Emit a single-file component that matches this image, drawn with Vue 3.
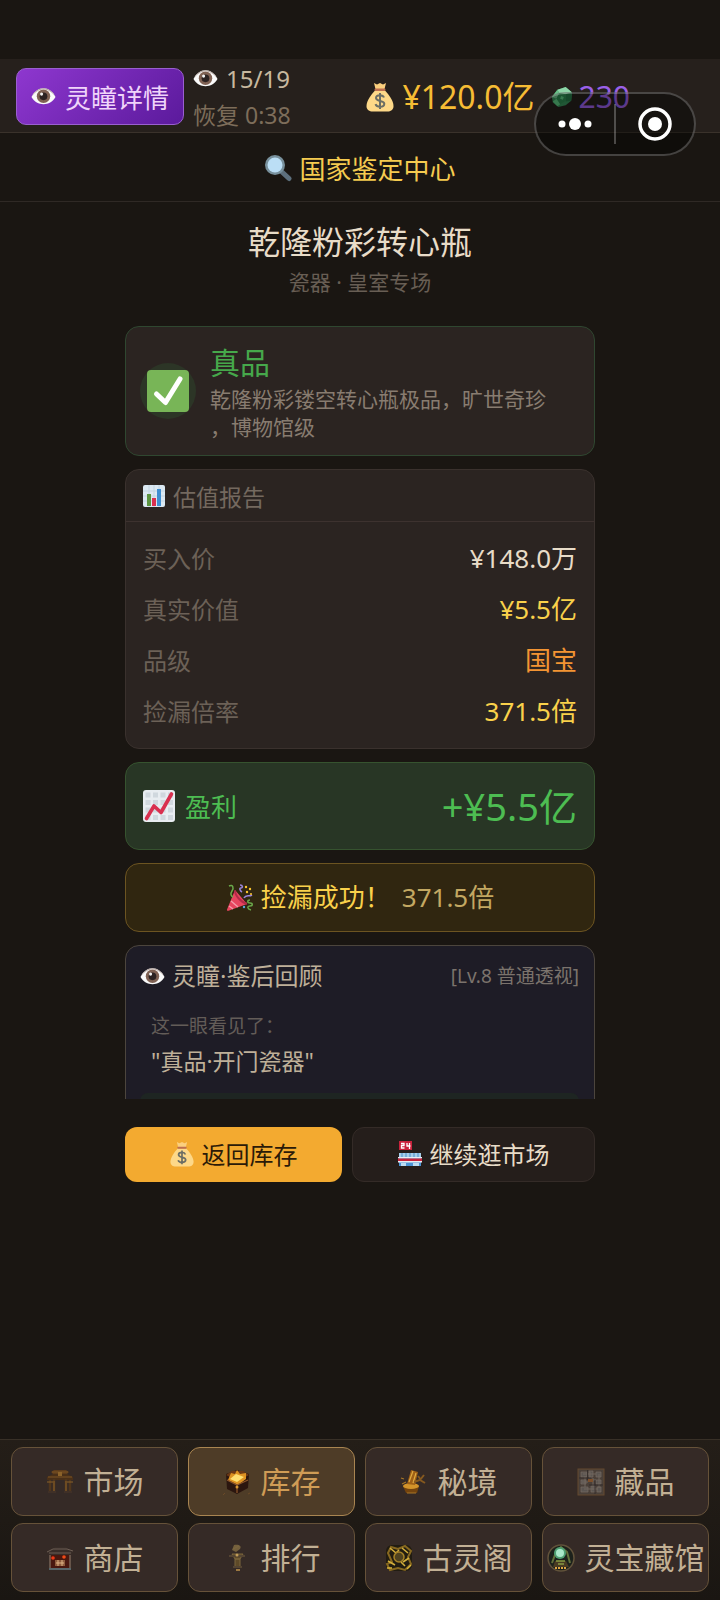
<template>
  <div class="app-page">
    <svg class="sprite" width="0" height="0" aria-hidden="true">
      <symbol id="i-eye" viewBox="0 0 26 26">
        <path d="M.5 13.500C3.500 7.500 8 4.500 13 4.500s9.500 3 12.500 9C22.500 18.500 18 21 13 21S3.500 18.500.5 13.500z" fill="#fafafa" />
        <circle cx="13" cy="12.800" r="7" fill="#806254" />
        <circle cx="13" cy="12.800" r="4" fill="#2c2222" />
        <circle cx="11" cy="10.500" r="1.600" fill="#f3f3f3" />
        <path d="M.5 13.500C3.500 7.500 8 4.500 13 4.500s9.500 3 12.500 9C22 8.500 18 5.800 13 5.800S4 8.500.5 13.500z" fill="#b9aaa4" />
      </symbol>
      <symbol id="i-bag" viewBox="0 0 28 30">
        <path d="M8 1l3 1.500L14 1l3 1.500L20 1l-1.500 6h-9z" fill="#fbcf7e" />
        <path d="M9 8.500h10C23 13 27.500 19 27.500 24c0 4-3 5.500-6 5.500h-15c-3 0-6-1.500-6-5.500 0-5 4.500-11 8.500-15.500z" fill="#fdd888" />
        <rect x="8.500" y="6.500" width="11" height="2.500" rx="1.200" fill="#bd6f50" />
        <path d="M18 15.500c-.6-1.600-2-2.300-4-2.300-2.300 0-4 1-4 2.800 0 4 8.300 1.800 8.300 5.800 0 1.900-1.800 3-4.200 3-2.300 0-4-.9-4.600-2.600M14 11v16" fill="none" stroke="#6b6e65" stroke-width="2" />
      </symbol>
      <symbol id="i-gem" viewBox="0 0 24 24">
        <path d="M1 12l6-8 9-3 7 6-1 9-6 5-8 2-6-5z" fill="#38925a" />
        <path d="M7 4l9-3 7 6-7 2-7-1z" fill="#8ed6a8" />
        <path d="M1 12l6-8 2 4-3 6z" fill="#6abf88" />
        <path d="M16 9l7-2-1 9-6 1z" fill="#277a48" />
        <path d="M6 14l3-6 7 1v7l-6 4z" fill="#2d8a50" />
        <path d="M11 11l3 1-1 3-3-1zM6 14l4 6-3 2-5-5z" fill="#5cc880" />
      </symbol>
      <symbol id="i-search" viewBox="0 0 28 28">
        <path d="M18 18l7 6.500" stroke="#5d6f7c" stroke-width="5" stroke-linecap="round" />
        <circle cx="11" cy="11" r="10" fill="#78909c" />
        <circle cx="11" cy="11" r="7.500" fill="#bbdef5" />
      </symbol>
      <symbol id="i-check" viewBox="0 0 42 42">
        <rect width="42" height="42" rx="4" fill="#78b557" />
        <path d="M9.500 24l9 8.500L33 9" fill="none" stroke="#fff" stroke-width="5" stroke-linecap="round" stroke-linejoin="round" />
      </symbol>
      <symbol id="i-bars" viewBox="0 0 22 22">
        <rect width="22" height="22" rx="2" fill="#dce9f3" />
        <path d="M0 6h22M0 11h22M0 16h22M6 0v22M11 0v22M16 0v22" stroke="#c3d5e2" stroke-width="1" />
        <rect x="4" y="9" width="4" height="12" fill="#5b9440" />
        <rect x="9" y="13" width="4" height="8" fill="#d9304f" />
        <rect x="14" y="4" width="4" height="17" fill="#3f8fd2" />
      </symbol>
      <symbol id="i-trend" viewBox="0 0 32 32">
        <rect width="32" height="32" rx="3" fill="#e8edf1" />
        <path d="M2.500 2.500h5v5h-5zM10 2.500h5v5h-5zM17.500 2.500h5v5h-5zM25 2.500h5v5h-5zM2.500 10h5v5h-5zM10 10h5v5h-5zM17.500 10h5v5h-5zM25 10h5v5h-5zM2.500 17.500h5v5h-5zM10 17.500h5v5h-5zM17.500 17.500h5v5h-5zM25 17.500h5v5h-5zM2.500 25h5v5h-5zM10 25h5v5h-5zM17.500 25h5v5h-5zM25 25h5v5h-5z" fill="#d0d8de" />
        <path d="M3.500 28.500L11 16l7 6.500L28.500 4" fill="none" stroke="#d9304f" stroke-width="3.600" stroke-linecap="round" stroke-linejoin="round" />
      </symbol>
      <symbol id="i-party" viewBox="0 0 28 28">
        <path d="M9 6L1 25.500c-.4 1 .5 1.700 1.500 1.200L21 20z" fill="#e8455f" />
        <path d="M9 6.500c0 5 6 12 12 13.200" fill="none" stroke="#b32b49" stroke-width="2" />
        <path d="M3 22l4 3M5 17l7 6" stroke="#f49aa8" stroke-width="1.500" />
        <path d="M3 2c4-2 5 2 3 5s-1 5 1 6M24 16c-3 0-3 3 0 3s3 3 0 3-3 3 1 4" fill="none" stroke="#6aa84a" stroke-width="1.500" />
        <path d="M14 1c3 0 3 3 1 3s-1 3 1 4M18 14c2-4 5-1 8-3" fill="none" stroke="#9a86dc" stroke-width="1.600" />
        <g fill="#fbc52d"><circle cx="20" cy="3" r="1.200" /><circle cx="24" cy="5" r="1.200" /><circle cx="21" cy="8" r="1.200" /><circle cx="25" cy="10" r="1" /></g>
        <circle cx="18" cy="23" r="1.200" fill="#5ba7dc" />
      </symbol>
      <symbol id="i-store" viewBox="0 0 24 26">
        <rect x="1" y="0" width="13" height="9" fill="#c9223c" />
        <path d="M3 2.500h3v2H3.500V7H6.500M9 2v3h3.500M11.500 2v6" fill="none" stroke="#fff" stroke-width="1.300" />
        <path d="M1 12h22v13H1z" fill="#4b93d4" />
        <path d="M1 12h22v4H1z" fill="#a6cdea" />
        <path d="M4 12v4M8 12v4M12 12v4M16 12v4M20 12v4" stroke="#6aa5d5" stroke-width="1.500" />
        <path d="M0 16h24v1.500H0zM0 20h24v1.500H0z" fill="#e7eef3" />
        <path d="M0 17.500h24V20H0z" fill="#c9223c" />
        <path d="M3 22h5v3H3zM15 22h6v3h-6z" fill="#bcdcf2" />
      </symbol>
      <symbol id="i-gate" viewBox="0 0 28 28">
        <path d="M5 4l3-2h12l3 2-3 3H8z" fill="#5f3d1b" />
        <path d="M1 9l6-3h14l6 3v3H1z" fill="#4a3018" />
        <path d="M6 4h16M2 9h24" stroke="#7c5525" stroke-width="1" />
        <path d="M4 12v11M8 11v14M20 11v14M24 12v11" stroke="#50361c" stroke-width="2.500" />
        <path d="M8 13v11M20 13v11M1 14h6M21 14h6" stroke="#8a6029" stroke-width="1" />
        <path d="M2 24h8M18 24h8" stroke="#403027" stroke-width="2" />
        <path d="M12 4h4v4h-4z" fill="#8b6229" />
      </symbol>
      <symbol id="i-chest" viewBox="0 0 28 28">
        <path d="M3 6L14 2l12 4-1 14-11 6-10-5z" fill="#2b160f" />
        <path d="M3 7l6-4h11l6 4-11 6z" fill="#6b3915" />
        <path d="M5 12l3-7 4 1 2-4 3 4 6-1v6l-8 6z" fill="#dd9322" />
        <path d="M7 11l6-5 8 3-7 5z" fill="#ffe070" />
        <path d="M4 12l10 5 11-5M14 17v8" fill="none" stroke="#8c552a" stroke-width="1.200" />
        <circle cx="14" cy="19" r="1.500" fill="#d79733" />
        <path d="M0 27l2-2M25 26l2-1" stroke="#6b4a27" stroke-width="1" />
      </symbol>
      <symbol id="i-realm" viewBox="0 0 28 28">
        <path d="M3 18h16l-2 7H6z" fill="#74440e" />
        <ellipse cx="11" cy="18" rx="8" ry="3" fill="#d3942a" />
        <path d="M7 16l4-14 7 2-3 13z" fill="#9f6016" />
        <path d="M9 14l4-11M13 15l3-10" stroke="#e0aa40" stroke-width="1.200" />
        <path d="M14 14l6-2 4-5M20 12l5 3M18 8l3 4" fill="none" stroke="#86591f" stroke-width="2" />
        <path d="M2 16l4-2M1 10l3 1M7 25h9" stroke="#a97727" stroke-width="1.200" />
      </symbol>
      <symbol id="i-tablet" viewBox="0 0 28 28">
        <rect x="1" y="1" width="26" height="26" fill="#4a4039" stroke="#64492f" />
        <path d="M4 4h6v5H4zM12 3h4v6h-4zM19 4h5v5h-5zM4 12h5v4H4zM19 12h5v4h-5zM4 19h7v5H4zM14 18h4v6h-4zM20 19h4v5h-4z" fill="#5b5551" stroke="#756a62" stroke-width=".7" />
        <path d="M6 6h13M5 14h6M16 10v12M7 21h14M22 6v14M8 8v11M11 12h8M13 4v6" stroke="#70665f" stroke-width="1" />
        <path d="M11 11h5v3h-5z" fill="#7d502c" />
        <path d="M2 10h12M12 17h14M10.500 2v10M18 12v14" stroke="#302a28" stroke-width=".8" />
      </symbol>
      <symbol id="i-shop" viewBox="0 0 28 28">
        <path d="M1 8l5-3 3-2h11l3 2 4 2-2 5H3z" fill="#382d28" />
        <path d="M1 8l6-3h14l6 2M3 9h22" fill="none" stroke="#6d5e54" stroke-width="1" />
        <path d="M4 11h20v13H4z" fill="#48180f" />
        <path d="M4 11v13M24 11v13" stroke="#776356" stroke-width="1.500" />
        <path d="M3 25h22" stroke="#6f9099" stroke-width="1.200" />
        <path d="M9 16h10v6H9z" fill="#8c5a3b" />
        <path d="M10 19h8M12 16v6M16 16v6" stroke="#dcb285" stroke-width="1" />
        <circle cx="7" cy="14" r="1.800" fill="#ef3815" /><circle cx="18" cy="13" r="1.800" fill="#f04a18" />
      </symbol>
      <symbol id="i-rank" viewBox="0 0 28 28">
        <path d="M11 1c5-1 8 1 6 4l-4 3-4-2z" fill="#74603d" />
        <path d="M10 5l6-3M9 10h11l-3 5h-5zM12 15h5v8h-5z" fill="#5d4928" stroke="#7d673d" stroke-width="1" />
        <path d="M6 12h16M10 23h9" stroke="#544432" stroke-width="2" />
        <path d="M13 25h4v2h-4z" fill="#9b7740" />
        <circle cx="14" cy="11" r="1.500" fill="#c19d59" />
      </symbol>
      <symbol id="i-pavilion" viewBox="0 0 28 28">
        <rect x="1" y="1" width="26" height="26" rx="6" fill="#211c11" />
        <path d="M3 9l3-6 7 2 7-3 6 5-3 6 3 7-6 6-7-2-8 2-3-6 5-2z" fill="none" stroke="#876820" stroke-width="2" />
        <path d="M5 4l6 5M17 4l6 5M3 17l7 4M18 18l6-4M14 6l-3 3M20 22l-4-4" stroke="#d2ae3c" stroke-width="1.600" />
        <circle cx="14" cy="13" r="5" fill="#4f421f" stroke="#a68228" stroke-width="1.500" />
        <path d="M2 24h5M22 25l4-4" stroke="#dab53b" stroke-width="1.500" />
      </symbol>
      <symbol id="i-museum" viewBox="0 0 28 28">
        <circle cx="14" cy="14" r="13" fill="#1c211b" stroke="#61523a" stroke-width="1.500" />
        <path d="M5 19l4-11 5-5 6 5 3 11" fill="none" stroke="#61703a" stroke-width="2" />
        <circle cx="13" cy="9" r="6" fill="#4e9f72" />
        <circle cx="13" cy="9" r="4" fill="#a9e8c9" />
        <path d="M8 17h11l3 6H6z" fill="#493b23" />
        <path d="M9 17h9M11 20h6" stroke="#879b43" stroke-width="1.500" />
        <path d="M8 24h12" stroke="#dda342" stroke-width="2" stroke-dasharray="2 1" />
      </symbol>
    </svg>

    <header class="status-bar">
      <button class="eye-button" type="button">
        <svg class="icon-md"><use href="#i-eye" /></svg>
        <span>灵瞳详情</span>
      </button>
      <div class="energy">
        <div class="energy-count">
          <svg class="icon-md"><use href="#i-eye" /></svg>
          <span>{{ energy.current }}/{{ energy.max }}</span>
        </div>
        <div class="energy-timer">恢复 {{ energy.timer }}</div>
      </div>
      <div class="wallet">
        <svg class="icon-bag"><use href="#i-bag" /></svg>
        <span class="money">¥120.0亿</span>
        <svg class="icon-gem"><use href="#i-gem" /></svg>
        <span class="gems">230</span>
      </div>
    </header>

    <div class="capsule">
      <button type="button" aria-label="更多">
        <svg width="34" height="12" viewBox="0 0 34 12" fill="#fff">
          <circle cx="4" cy="6" r="3.500" />
          <circle cx="17" cy="6" r="6" />
          <circle cx="30" cy="6" r="3.500" />
        </svg>
      </button>
      <span class="capsule-divider"></span>
      <button type="button" aria-label="关闭">
        <svg width="34" height="34" viewBox="0 0 34 34">
          <circle cx="17" cy="17" r="15" fill="none" stroke="#fff" stroke-width="3.500" />
          <circle cx="17" cy="17" r="7" fill="#fff" />
        </svg>
      </button>
    </div>

    <div class="page-head">
      <svg class="icon-bag"><use href="#i-search" /></svg>
      <span>国家鉴定中心</span>
    </div>

    <main class="content">
      <div class="item-head">
        <h1>乾隆粉彩转心瓶</h1>
        <p>瓷器 · 皇室专场</p>
      </div>

      <div class="results">
        <section class="card verdict">
          <div class="verdict-icon">
            <svg><use href="#i-check" /></svg>
          </div>
          <div>
            <h2>真品</h2>
            <p>{{ verdictText }}</p>
          </div>
        </section>

        <section class="card report">
          <div class="report-head">
            <svg class="icon-sm"><use href="#i-bars" /></svg>
            <span>估值报告</span>
          </div>
          <dl>
            <div v-for="row in rows" :key="row.label" class="report-row">
              <dt>{{ row.label }}</dt>
              <dd :class="row.tone">{{ row.value }}</dd>
            </div>
          </dl>
        </section>

        <section class="card profit">
          <svg><use href="#i-trend" /></svg>
          <span class="profit-label">盈利</span>
          <span class="profit-amount">+¥5.5亿</span>
        </section>

        <section class="card bargain">
          <svg class="icon-bag"><use href="#i-party" /></svg>
          <span>捡漏成功！</span>
          <span class="bargain-rate">371.5倍</span>
        </section>

        <section class="card review">
          <div class="review-head">
            <svg class="icon-md"><use href="#i-eye" /></svg>
            <span>灵瞳·鉴后回顾</span>
            <span class="review-level">[Lv.8 普通透视]</span>
          </div>
          <div class="review-body">
            <p class="review-hint">这一眼看见了：</p>
            <p class="review-quote">"真品·开门瓷器"</p>
          </div>
          <div class="review-more"></div>
        </section>
      </div>

      <div class="actions">
        <button class="primary" type="button">
          <svg class="icon-act"><use href="#i-bag" /></svg>
          <span>返回库存</span>
        </button>
        <button class="secondary" type="button">
          <svg class="icon-act"><use href="#i-store" /></svg>
          <span>继续逛市场</span>
        </button>
      </div>
    </main>

    <nav class="tabs">
      <button
        v-for="tab in tabs"
        :key="tab.label"
        type="button"
        :class="{ active: tab.label === activeTab }"
        @click="activeTab = tab.label"
      >
        <svg class="icon-tab"><use :href="'#i-' + tab.icon" /></svg>
        <span>{{ tab.label }}</span>
      </button>
    </nav>
  </div>
</template>

<script setup>
import { ref } from 'vue';

const activeTab = ref('库存');

const energy = { current: 15, max: 19, timer: '0:38' };

const verdictText = '乾隆粉彩镂空转心瓶极品，旷世奇珍\n，博物馆级';

const rows = [
  { label: '买入价', value: '¥148.0万', tone: 'plain' },
  { label: '真实价值', value: '¥5.5亿', tone: 'gold' },
  { label: '品级', value: '国宝', tone: 'orange' },
  { label: '捡漏倍率', value: '371.5倍', tone: 'gold' }
];

const tabs = [
  { label: '市场', icon: 'gate' },
  { label: '库存', icon: 'chest' },
  { label: '秘境', icon: 'realm' },
  { label: '藏品', icon: 'tablet' },
  { label: '商店', icon: 'shop' },
  { label: '排行', icon: 'rank' },
  { label: '古灵阁', icon: 'pavilion' },
  { label: '灵宝藏馆', icon: 'museum' }
];
</script>

<style>
body {
  margin: 0;
  background: #1a1612;
}
</style>

<style scoped>
.app-page {
  position: relative;
  display: flex;
  flex-direction: column;
  min-height: 100vh;
  box-sizing: border-box;
  padding-top: 59px;
  background: #1a1612;
  color: #e8dcc8;
  font-family: "Noto Sans", "Noto Sans CJK SC", sans-serif;
}

.sprite {
  position: absolute;
}

button {
  display: flex;
  align-items: center;
  justify-content: center;
  box-sizing: border-box;
  margin: 0;
  padding: 0;
  border: none;
  background: none;
  color: inherit;
  font: inherit;
  white-space: nowrap;
  cursor: pointer;
}

svg {
  flex-shrink: 0;
}

h1, h2, p, dl, dd {
  margin: 0;
  font-weight: inherit;
}

.icon-sm {
  width: 22px;
  height: 22px;
}

.icon-md {
  width: 25px;
  height: 25px;
}

.icon-act {
  width: 24px;
  height: 26px;
}

.icon-bag {
  width: 28px;
  height: 30px;
}

.icon-gem {
  width: 22px;
  height: 22px;
  margin-left: 16px;
}

.icon-tab {
  width: 28px;
  height: 28px;
}

/* top bar */
.status-bar {
  display: flex;
  align-items: center;
  box-sizing: border-box;
  height: 74px;
  padding: 2px 90px 0 16px;
  background: #26201c;
  border-bottom: 1px solid #3a322b;
}

.eye-button {
  gap: 9px;
  height: 57px;
  padding: 0 14px;
  border: 1px solid #9a5fd0;
  border-radius: 10px;
  background: linear-gradient(135deg, #8e37cf, #5b1a9c);
  color: #f0d4fa;
  font-size: 26px;
}

.energy {
  margin-left: 9px;
}

.energy-count {
  display: flex;
  align-items: center;
  gap: 8px;
  color: #c8b89f;
  font-size: 24px;
  line-height: 37px;
}

.energy-timer {
  color: #7d6d5a;
  font-size: 23px;
  line-height: 37px;
}

.wallet {
  display: flex;
  align-items: center;
  margin-left: auto;
  font-size: 32px;
  line-height: 48px;
}

.money {
  margin-left: 8px;
  color: #f6bc34;
}

.gems {
  margin-left: 6px;
  color: #9a60e8;
  font-size: 30px;
}

.capsule {
  position: absolute;
  top: 92px;
  right: 24px;
  display: flex;
  align-items: center;
  box-sizing: border-box;
  width: 162px;
  height: 64px;
  border: 2px solid rgba(255, 255, 255, 0.22);
  border-radius: 32px;
  background: rgba(0, 0, 0, 0.4);
}

.capsule button {
  flex: 1;
  height: 100%;
}

.capsule-divider {
  width: 2px;
  height: 40px;
  background: rgba(255, 255, 255, 0.25);
}

.page-head {
  display: flex;
  align-items: center;
  justify-content: center;
  gap: 7px;
  height: 69px;
  padding-top: 2px;
  border-bottom: 1px solid #2f2925;
  box-sizing: border-box;
  color: #f5cb50;
  font-size: 26px;
}

/* main column */
.content {
  box-sizing: border-box;
  width: 100%;
  max-width: 470px;
  margin: 0 auto;
}

.item-head {
  padding: 17px 0 26px;
  text-align: center;
}

.item-head h1 {
  font-size: 32px;
  line-height: 46px;
}

.item-head p {
  color: #685e54;
  font-size: 21px;
  line-height: 35px;
}

.results {
  display: flex;
  flex-direction: column;
  gap: 13px;
  max-height: 773px;
  overflow-y: auto;
  scrollbar-width: none;
}

.card {
  flex-shrink: 0;
  box-sizing: border-box;
  border: 1px solid #3a312d;
  border-radius: 14px;
  background: #2b2421;
}

.verdict {
  display: flex;
  align-items: center;
  gap: 14px;
  padding: 14px;
  border-color: #2f4730;
}

.verdict-icon {
  display: flex;
  align-items: center;
  justify-content: center;
  flex-shrink: 0;
  width: 56px;
  height: 56px;
  border-radius: 50%;
  background: #2c3526;
}

.verdict-icon svg {
  width: 42px;
  height: 42px;
}

.verdict h2 {
  color: #46a84b;
  font-size: 30px;
  line-height: 44px;
}

.verdict p {
  color: #887c70;
  font-size: 21px;
  line-height: 28px;
  white-space: pre-line;
}

.report-head {
  display: flex;
  align-items: center;
  gap: 8px;
  height: 51px;
  padding: 0 17px;
  border-bottom: 1px solid #3d322f;
  color: #74695f;
  font-size: 23px;
}

.report dl {
  padding: 11px 17px;
}

.report-row {
  display: flex;
  align-items: center;
  justify-content: space-between;
  line-height: 51px;
}

.report-row dt {
  color: #6c6157;
  font-size: 24px;
}

.report-row dd {
  font-size: 26px;
}

.plain {
  color: #e8dcc8;
}

.gold {
  color: #f9d14b;
}

.orange {
  color: #f39433;
}

.profit {
  display: flex;
  align-items: center;
  gap: 10px;
  padding: 15px 17px;
  border-color: #36532f;
  background: #283625;
  color: #4dbd52;
}

.profit svg {
  width: 32px;
  height: 32px;
}

.profit-label {
  font-size: 26px;
}

.profit-amount {
  margin-left: auto;
  font-size: 38px;
  line-height: 56px;
}

.bargain {
  display: flex;
  align-items: center;
  justify-content: center;
  gap: 7px;
  padding: 15px 17px;
  border-color: #6c5421;
  background: #302610;
  color: #f9d14b;
  font-size: 26px;
  line-height: 37px;
}

.bargain-rate {
  margin-left: 4px;
  color: #c3a862;
}

.review {
  padding: 12px 15px 14px 14px;
  border-color: #4c453d;
  background: #1e1c26;
}

.review-head {
  display: flex;
  align-items: center;
  gap: 7px;
  color: #bfb099;
  font-size: 24px;
  line-height: 36px;
}

.review-level {
  margin-left: auto;
  color: #7b736c;
  font-size: 19px;
}

.review-body {
  padding: 16px 11px 13px;
}

.review-hint {
  color: #635c58;
  font-size: 19px;
  line-height: 32px;
}

.review-quote {
  color: #bfb099;
  font-size: 23px;
  line-height: 38px;
}

.review-more {
  height: 60px;
  border-radius: 8px;
  background: #1e2522;
}

.actions {
  display: flex;
  gap: 10px;
  margin-top: 28px;
}

.actions button {
  flex: 1 1 auto;
  gap: 8px;
  height: 55px;
  padding-bottom: 2px;
  border-radius: 12px;
  font-size: 24px;
}

.actions .primary {
  background: #f3aa30;
  color: #2b1a08;
}

.actions .secondary {
  border: 1px solid #342b27;
  background: #251e1b;
  color: #e8dcc8;
}

/* bottom navigation */
.tabs {
  display: grid;
  grid-template-columns: repeat(4, minmax(0, 1fr));
  gap: 7px 10px;
  margin-top: auto;
  padding: 7px 11px 8px;
  border-top: 1px solid #383027;
  background: linear-gradient(#241e18, #1a1612);
}

.tabs button {
  gap: 10px;
  height: 69px;
  border: 1px solid #665239;
  border-radius: 12px;
  background: #352a26;
  color: #c2b094;
  font-size: 30px;
}

.tabs span {
  padding-bottom: 4px;
}

.tabs .active {
  border-color: #a98551;
  background: #4e3c27;
  color: #cf9c56;
}
</style>
